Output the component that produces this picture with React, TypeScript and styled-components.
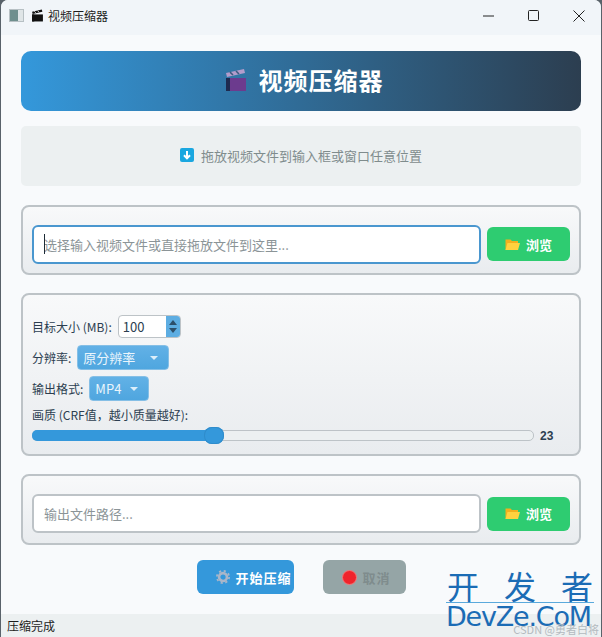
import React from "react";
import styled, { createGlobalStyle } from "styled-components";

const Global = createGlobalStyle`
  html, body {
    margin: 0;
    padding: 0;
    background: #59626a;
  }
  * {
    box-sizing: border-box;
  }
`;

const CJK = `"Noto Sans CJK SC", "Liberation Sans", sans-serif`;

const Window = styled.div`
  position: relative;
  width: 602px;
  height: 637px;
  padding: 0 1px 0 1px;
  overflow: hidden;
  font-family: ${CJK};
  color: #2c3e50;
`;

const Surface = styled.div`
  display: flex;
  flex-direction: column;
  height: 100%;
  border-radius: 7px 7px 0 0;
  overflow: hidden;
  background: #f8fafc;
`;

const TitleBar = styled.div`
  display: flex;
  align-items: center;
  flex: none;
  height: 35px;
  padding: 0 0 4px 8px;
  background: #f1f5f9;
  color: #1c1c1c;
  font-size: 12px;
`;

const AppIcon = styled.div`
  display: flex;
  width: 15px;
  height: 13px;
  border: 1px solid #b7c0c4;
  background: #dfe5e7;
  margin-right: 7px;

  &::before {
    content: "";
    width: 8px;
    background: #6f8f8e;
  }
`;

const TitleText = styled.span`
  margin-left: 4px;
  flex: 1;
`;

const WinButton = styled.div`
  display: flex;
  align-items: center;
  justify-content: center;
  width: 45px;
  height: 31px;
`;

const Main = styled.main`
  display: flex;
  flex-direction: column;
  flex: 1;
  padding: 16px 20px 0;
`;

const Banner = styled.header`
  display: flex;
  align-items: center;
  justify-content: center;
  gap: 11px;
  height: 60px;
  padding: 0 0 3px 5px;
  border-radius: 10px;
  background: linear-gradient(90deg, #3498db, #2c3e50);
  color: #fff;
  font-size: 24px;
  font-weight: 700;
  letter-spacing: 1px;
`;

const Hint = styled.div`
  display: flex;
  align-items: center;
  justify-content: center;
  gap: 7px;
  height: 60px;
  margin-top: 15px;
  padding-bottom: 2px;
  border-radius: 5px;
  background: #ecf0f1;
  color: #7f8c8d;
  font-size: 13px;
`;

const Group = styled.section<{ $height: number; $top: number }>`
  height: ${(p) => p.$height}px;
  margin-top: ${(p) => p.$top}px;
  padding: 0 9px;
  border: 2px solid #bdc3c7;
  border-radius: 8px;
  background: linear-gradient(180deg, #f8f9fa, #e9ecef);
`;

const PathRow = styled.div`
  display: flex;
  align-items: center;
  gap: 6px;
  height: 100%;
  padding-top: 8px;
`;

const Field = styled.div`
  position: relative;
  flex: 1;
  height: 39px;
`;

const PathInput = styled.input<{ $focused?: boolean }>`
  width: 100%;
  height: 100%;
  padding: 0 10px;
  border: 2px solid ${(p) => (p.$focused ? "#4a97cf" : "#bdc3c7")};
  border-radius: 6px;
  background: #fff;
  outline: none;
  font-family: ${CJK};
  font-size: 13px;

  &::placeholder {
    color: #8b9497;
    opacity: 1;
  }
`;

const Caret = styled.span`
  position: absolute;
  left: 12px;
  top: 9px;
  width: 1px;
  height: 20px;
  background: #1d2b36;
`;

const BrowseButton = styled.button`
  display: flex;
  align-items: center;
  gap: 6px;
  flex: none;
  width: 83px;
  height: 34px;
  padding: 0 0 0 18px;
  border: none;
  border-radius: 6px;
  background: #2ecc71;
  color: #fff;
  font-family: ${CJK};
  font-size: 13px;
  font-weight: 700;
`;

const Settings = styled.div`
  display: flex;
  flex-direction: column;
  align-items: flex-start;
  padding-top: 20px;
  font-size: 12px;
`;

const SettingRow = styled.div<{ $gap: number; $top?: number }>`
  display: flex;
  align-items: center;
  gap: ${(p) => p.$gap}px;
  margin-top: ${(p) => p.$top ?? 0}px;
  line-height: 16px;
`;

const SpinBox = styled.div`
  display: flex;
  width: 63px;
  height: 23px;
  border: 1px solid #bdc3c7;
  border-radius: 4px;
  overflow: hidden;
  background: #fff;
  font-size: 13px;
  line-height: 21px;
`;

const SpinValue = styled.span`
  flex: 1;
  padding-left: 4px;
`;

const SpinArrows = styled.div`
  display: flex;
  flex-direction: column;
  align-items: center;
  justify-content: center;
  gap: 3px;
  width: 14px;
  background: #5dade2;
`;

const Combo = styled.div<{ $width: number }>`
  display: flex;
  align-items: center;
  justify-content: space-between;
  width: ${(p) => p.$width}px;
  height: 25px;
  padding: 0 10px 0 5px;
  border: 1px solid #85bfe6;
  border-radius: 4px;
  background: linear-gradient(180deg, #62b1e6, #4fa6df);
  color: #eaf5fc;
  font-size: 13px;
`;

const Chevron = styled.span`
  width: 0;
  height: 0;
  border-left: 4px solid transparent;
  border-right: 4px solid transparent;
  border-top: 4px solid #dbeefa;
`;

const SliderRow = styled.div`
  display: flex;
  align-items: center;
  gap: 6px;
  width: 100%;
  margin-top: 4px;
  height: 17px;
`;

const Track = styled.div`
  position: relative;
  width: 502px;
  height: 11px;
  border: 1px solid #bdc3c7;
  border-radius: 5px;
  background: #ecf0f1;
`;

const TrackFill = styled.div`
  height: 11px;
  margin: -1px;
  border-radius: 5px;
  background: #3498db;
`;

const Thumb = styled.div`
  position: absolute;
  top: -4px;
  width: 20px;
  height: 17px;
  margin-left: -11px;
  border-radius: 8px;
  background: #3498db;
  box-shadow: inset 0 0 0 1px #2f8ccb;
`;

const SliderValue = styled.span`
  font-weight: 700;
  font-family: "Liberation Sans", sans-serif;
  font-size: 12px;
`;

const Actions = styled.div`
  display: flex;
  justify-content: center;
  gap: 29px;
  margin-top: 15px;
`;

const ActionButton = styled.button<{ $width: number; $disabled?: boolean }>`
  display: flex;
  align-items: center;
  gap: 6px;
  width: ${(p) => p.$width}px;
  height: 34px;
  padding: 0 0 0 19px;
  border: none;
  border-radius: 6px;
  background: ${(p) => (p.$disabled ? "#95a5a6" : "#3498db")};
  color: ${(p) => (p.$disabled ? "#7f8c8d" : "#fff")};
  font-family: ${CJK};
  font-size: 13px;
  font-weight: 700;
  letter-spacing: 1px;
`;

const RedDot = styled.span`
  width: 15px;
  height: 15px;
  border-radius: 50%;
  background: #f0242c;
  border: 1px solid #f27a7a;
`;

const StatusBar = styled.footer`
  flex: none;
  height: 23px;
  margin-top: auto;
  padding-left: 6px;
  background: #ecf0f1;
  color: #1c1c1c;
  font-size: 12px;
  line-height: 24px;
`;

const Watermark = styled.div`
  position: absolute;
  left: 446px;
  top: 566px;
  width: 148px;
  color: #1b6cb5;
`;

const WatermarkCn = styled.div`
  display: flex;
  justify-content: space-between;
  padding: 0 1px;
  height: 37px;
  border-bottom: 1px solid #5aa9dc;
  font-size: 32px;
  font-weight: 400;
  line-height: 38px;
`;

const WatermarkEn = styled.div`
  font-family: "DejaVu Sans", sans-serif;
  font-size: 27px;
  line-height: 28px;
  letter-spacing: -1.2px;
  white-space: nowrap;
`;

const Credit = styled.div`
  position: absolute;
  right: 3px;
  bottom: 2px;
  color: #b3babf;
  font-size: 11px;
  line-height: 12px;
`;

const Clapper = ({ size, dark }: { size: number; dark?: boolean }) => (
  <svg width={size} height={size} viewBox="0 0 24 24">
    <rect x="2" y="10" width="20" height="13" fill={dark ? "#111" : "#6c3b8e"} />
    <rect x="2" y="10" width="4" height="13" fill={dark ? "#111" : "#1e2a4f"} />
    <path d="M2 5 L20 1 L21 5 L3 9 Z" fill={dark ? "#111" : "#b39ccb"} />
    <path d="M6 4.2 L9 7 M12 3 L15 6" stroke={dark ? "#eee" : "#3c5a80"} strokeWidth="1.6" />
  </svg>
);

const DownloadIcon = () => (
  <svg width="14" height="14" viewBox="0 0 14 14">
    <rect width="14" height="14" rx="2" fill="#1aa7e0" />
    <path d="M7 3 V10 M4 7.2 L7 10.4 L10 7.2" stroke="#fff" strokeWidth="2" fill="none" />
  </svg>
);

const FolderIcon = () => (
  <svg width="15" height="13" viewBox="0 0 15 13">
    <path d="M0.5 1.5 H5.5 L7 3 H13 V12 H0.5 Z" fill="#f2b01e" />
    <path d="M0.5 12 L2.5 5 H15 L13 12 Z" fill="#ffd23f" />
  </svg>
);

const GearIcon = () => (
  <svg width="14" height="14" viewBox="0 0 16 16">
    <circle cx="8" cy="8" r="4.5" fill="none" stroke="#a9b6c9" strokeWidth="3" />
    <circle
      cx="8"
      cy="8"
      r="7"
      fill="none"
      stroke="#a9b6c9"
      strokeWidth="2"
      strokeDasharray="2.5 3"
    />
  </svg>
);

const SpinArrow = ({ down }: { down?: boolean }) => (
  <svg width="8" height="5" viewBox="0 0 8 5">
    <path d={down ? "M0 0 H8 L4 5 Z" : "M0 5 H8 L4 0 Z"} fill="#2c4f6b" />
  </svg>
);

const App = () => {
  const quality = 36.3;

  return (
    <Window>
      <Global />
      <Surface>
        <TitleBar>
          <AppIcon />
          <Clapper size={13} dark />
          <TitleText>视频压缩器</TitleText>
          <WinButton>
            <svg width="11" height="11" viewBox="0 0 11 11">
              <path d="M0 6 H11" stroke="#222" />
            </svg>
          </WinButton>
          <WinButton>
            <svg width="11" height="11" viewBox="0 0 11 11">
              <rect x="0.5" y="0.5" width="10" height="10" rx="1" fill="none" stroke="#222" />
            </svg>
          </WinButton>
          <WinButton>
            <svg width="12" height="12" viewBox="0 0 12 12">
              <path d="M0.5 0.5 L11.5 11.5 M11.5 0.5 L0.5 11.5" stroke="#222" />
            </svg>
          </WinButton>
        </TitleBar>

        <Main>
          <Banner>
            <Clapper size={24} />
            <span>视频压缩器</span>
          </Banner>

          <Hint>
            <DownloadIcon />
            <span>拖放视频文件到输入框或窗口任意位置</span>
          </Hint>

          <Group $height={70} $top={19}>
            <PathRow>
              <Field>
                <PathInput $focused placeholder="选择输入视频文件或直接拖放文件到这里..." />
                <Caret />
              </Field>
              <BrowseButton>
                <FolderIcon />
                浏览
              </BrowseButton>
            </PathRow>
          </Group>

          <Group $height={163} $top={18}>
            <Settings>
              <SettingRow $gap={6}>
                <span>目标大小 (MB):</span>
                <SpinBox>
                  <SpinValue>100</SpinValue>
                  <SpinArrows>
                    <SpinArrow />
                    <SpinArrow down />
                  </SpinArrows>
                </SpinBox>
              </SettingRow>
              <SettingRow $gap={6} $top={7}>
                <span>分辨率:</span>
                <Combo $width={92}>
                  原分辨率
                  <Chevron />
                </Combo>
              </SettingRow>
              <SettingRow $gap={6} $top={6}>
                <span>输出格式:</span>
                <Combo $width={60}>
                  MP4
                  <Chevron />
                </Combo>
              </SettingRow>
              <SettingRow $gap={0} $top={6}>
                <span>画质 (CRF值，越小质量越好):</span>
              </SettingRow>
              <SliderRow>
                <Track>
                  <TrackFill style={{ width: `${quality}%` }} />
                  <Thumb style={{ left: `${quality}%` }} />
                </Track>
                <SliderValue>23</SliderValue>
              </SliderRow>
            </Settings>
          </Group>

          <Group $height={71} $top={18}>
            <PathRow>
              <Field>
                <PathInput placeholder="输出文件路径..." />
              </Field>
              <BrowseButton>
                <FolderIcon />
                浏览
              </BrowseButton>
            </PathRow>
          </Group>

          <Actions>
            <ActionButton $width={97}>
              <GearIcon />
              开始压缩
            </ActionButton>
            <ActionButton $width={83} $disabled>
              <RedDot />
              取消
            </ActionButton>
          </Actions>
        </Main>

        <StatusBar>压缩完成</StatusBar>
      </Surface>

      <Watermark>
        <WatermarkCn>
          <span>开</span>
          <span>发</span>
          <span>者</span>
        </WatermarkCn>
        <WatermarkEn>DevZe.CoM</WatermarkEn>
      </Watermark>
      <Credit>CSDN @勇者白将</Credit>
    </Window>
  );
};

export default App;
